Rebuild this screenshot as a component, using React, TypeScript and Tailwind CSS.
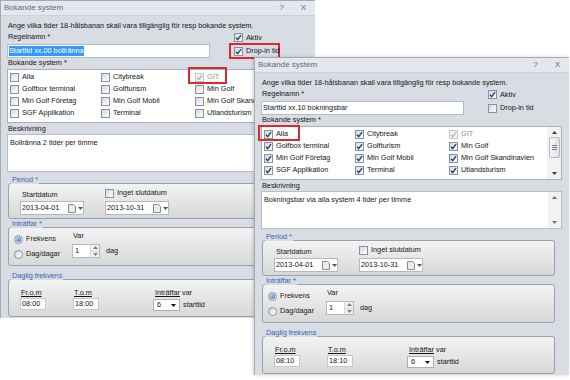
import React from 'react';

interface Option {
  label: string;
  checked?: boolean;
  disabled?: boolean;
}

interface DialogProps {
  name: string;
  nameSelected?: boolean;
  dropIn: boolean;
  dropInMarked?: boolean;
  options: Option[];
  description: string;
  scrollbars?: boolean;
  narrow?: boolean;
  from: string;
  to: string;
}

const NAMES = [
  'Alla',
  'Citybreak',
  'GIT',
  'Golfbox terminal',
  'Golfturism',
  'Min Golf',
  'Min Golf Företag',
  'Min Golf Mobil',
  'Min Golf Skandinavien',
  'SGF Applikation',
  'Terminal',
  'Utlandsturism',
];

const FIRST: Option[] = NAMES.map((label) => ({
  label,
  checked: label === 'GIT',
  disabled: label === 'GIT',
}));

const SECOND: Option[] = NAMES.map((label) => ({
  label,
  checked: true,
  disabled: label === 'GIT',
}));

const Check = ({ on, off }: { on?: boolean; off?: boolean }) => (
  <span
    className={`flex h-[9px] w-[9px] shrink-0 items-center justify-center border ${
      off ? 'border-[#c4c8ce] bg-[#f2f3f4]' : 'border-[#8a919b] bg-[linear-gradient(135deg,#d4d8dd,#ffffff)]'
    }`}
  >
    {on && (
      <svg viewBox="0 0 7 7" className="h-[7px] w-[7px]">
        <path d="M1 3.8 2.7 5.6 6.1 1.1" fill="none" stroke={off ? '#b3b7bd' : '#23417e'} strokeWidth="1.4" />
      </svg>
    )}
  </span>
);

const Radio = ({ on }: { on?: boolean }) => (
  <span className="flex h-[9px] w-[9px] shrink-0 items-center justify-center rounded-full border border-[#8a919b] bg-[linear-gradient(135deg,#d2d6db,#ffffff)]">
    {on && <span className="h-[5px] w-[5px] rounded-full bg-[radial-gradient(circle_at_35%_35%,#a9cbf3,#2a5cb0)]" />}
  </span>
);

const Arrow = ({ up, color = '#3a3a3a' }: { up?: boolean; color?: string }) => (
  <svg width="5" height="3" viewBox="0 0 5 3">
    <path d={up ? 'M0 3 2.5 0 5 3Z' : 'M0 0 2.5 3 5 0Z'} fill={color} />
  </svg>
);

const DateBox = ({ value, className = '' }: { value: string; className?: string }) => (
  <div className={`flex h-[14px] w-[64px] items-center border border-[#b2b9c3] bg-white pl-[1px] ${className}`}>
    <span className="w-[46px]">{value}</span>
    <svg width="8" height="9" viewBox="0 0 8 9">
      <path d="M0.5 0.5h5l2 2v6h-7z" fill="#ebebeb" stroke="#8a8a8a" />
    </svg>
    <span className="ml-[2px] flex">
      <Arrow color="#555" />
    </span>
  </div>
);

const Spin = ({ className = '' }: { className?: string }) => (
  <div className={`flex h-[14px] w-[28px] border border-[#b2b9c3] bg-white ${className}`}>
    <span className="flex-1 pl-[2px] leading-[12px]">1</span>
    <div className="flex w-[9px] flex-col border-l border-[#d3d7dc] bg-[#eef0f3]">
      <div className="flex flex-1 items-center justify-center border-b border-[#d3d7dc]">
        <Arrow up color="#7a7f86" />
      </div>
      <div className="flex flex-1 items-center justify-center">
        <Arrow color="#7a7f86" />
      </div>
    </div>
  </div>
);

const TimeBox = ({ value }: { value: string }) => (
  <div className="h-[12px] w-[26px] border border-[#c3c8cf] bg-white pl-[1px]">{value}</div>
);

// legend sits on the top border; padding goes on the inner box so the legend stays at the left
const Group = ({ title, className, pad, children }: { title: string; className: string; pad: string; children: React.ReactNode }) => (
  <fieldset
    className={`ml-[1px] mr-[7px] rounded-[3px] border border-[#9ba1aa] bg-[linear-gradient(180deg,#f3f3f3,#d8d8d8)] ${className}`}
  >
    <legend className="ml-[2px] px-[1px] pb-[6px] leading-[10px] text-[#3565b5]">{title}</legend>
    <div className={pad}>{children}</div>
  </fieldset>
);

const Dialog = ({ name, nameSelected, dropIn, dropInMarked, options, description, scrollbars, narrow, from, to }: DialogProps) => {
  const rows = [0, 1, 2, 3].map((r) => options.slice(r * 3, r * 3 + 3));

  return (
    <div className="w-[315px] border-l border-t border-[#a3aab4] bg-[#d8dce3]">
      {/* Title bar */}
      <div className="flex h-[15px] items-center justify-between border-b border-[#cdd2d9] bg-[#e4e7ec] pl-[3px] pr-[9px] text-[8px] text-[#626a76]">
        <span>Bokande system</span>
        <span className="flex gap-[17px]">
          <span>?</span>
          <span>X</span>
        </span>
      </div>

      <div className="pb-[1px] pl-[6px] pr-[7px] pt-[5px]">
        <div className="h-[10px] pl-[1px]">Ange vilka tider 18-hålsbanan skall vara tillgänglig för resp bokande system.</div>

        {/* Regelnamn + flags */}
        <div className="flex">
          <div className="w-[203px]">
            <div className="h-[12px] pl-[1px] leading-[12px]">Regelnamn *</div>
            <div className="mt-[1px] flex h-[14px] items-center border border-[#b5bcc6] bg-white pl-[1px]">
              <span className={nameSelected ? 'bg-[#3399ff] text-white' : ''}>{name}</span>
            </div>
          </div>
          <div className="ml-[19px] w-[51px]">
            <div className="mt-[1px] flex h-[11px] items-center gap-[3px] pl-[5px]">
              <Check on />
              <span>Aktiv</span>
            </div>
            <div
              className={`flex h-[16px] items-center gap-[3px] border-2 pl-[3px] ${
                dropInMarked ? 'border-[#d92a2f]' : 'border-transparent'
              }`}
            >
              <Check on={dropIn} />
              <span className="whitespace-nowrap">Drop-in tid</span>
            </div>
          </div>
        </div>

        {/* Bokande system */}
        <div className="-mt-[1px] h-[10px] pl-[1px]">Bokande system *</div>
        <div className={`mt-[1px] flex h-[54px] overflow-hidden border border-[#a9b0ba] bg-white ${narrow ? 'w-[248px]' : ''}`}>
          <div className="flex-1 pl-[2px] pt-[1px]">
            {rows.map((row, i) => (
              <div key={i} className="grid h-[12px] grid-cols-[91px_94px_1fr] items-center">
                {row.map((o) => (
                  <div key={o.label} className="flex items-center gap-[3px]">
                    <Check on={o.checked} off={o.disabled} />
                    <span className={`whitespace-nowrap ${o.disabled ? 'text-[#8d9096]' : ''}`}>{o.label}</span>
                  </div>
                ))}
              </div>
            ))}
          </div>
          {scrollbars && (
            <div className="flex w-[14px] flex-col items-center bg-[#f1f2f4] py-[1px]">
              <div className="flex h-[9px] items-center">
                <Arrow up />
              </div>
              <div className="flex h-[21px] w-[11px] flex-col items-center justify-center gap-[1px] rounded-[2px] border border-[#b4b9c1] bg-[linear-gradient(90deg,#f8f8f8,#dcdfe3)]">
                <span className="h-px w-[5px] bg-[#7c828b]" />
                <span className="h-px w-[5px] bg-[#7c828b]" />
                <span className="h-px w-[5px] bg-[#7c828b]" />
              </div>
              <div className="flex-1" />
              <div className="flex h-[9px] items-center">
                <Arrow />
              </div>
            </div>
          )}
        </div>

        {/* Beskrivning */}
        <div className="mt-[1px] h-[10px] pl-[1px]">Beskrivning</div>
        <div className="flex h-[38px] border border-[#b8bec7] bg-white">
          <div className="flex-1 pl-[2px] pt-[3px]">{description}</div>
          {scrollbars && (
            <div className="flex w-[13px] flex-col items-center justify-between bg-[#f1f2f4] py-[4px]">
              <Arrow up color="#6a6f76" />
              <Arrow color="#6a6f76" />
            </div>
          )}
        </div>

        {/* Period */}
        <Group title="Period *" className="mt-[3px]" pad="px-[11px] pb-[3px]">
          <div className="flex">
            <div className="w-[85px]">
              <div className="-mt-[1px] pl-[2px]">Startdatum</div>
              <DateBox className="mt-[1px]" value="2013-04-01" />
            </div>
            <div>
              <div className="-mt-[3px] flex h-[10px] items-center gap-[3px]">
                <Check />
                <span>Inget slutdatum</span>
              </div>
              <DateBox className="mt-[3px]" value="2013-10-31" />
            </div>
          </div>
        </Group>

        {/* Inträffar */}
        <Group title="Inträffar *" className="" pad="px-[5px] pb-[5px]">
          <div className="flex items-start">
            <div className="-mt-[2px] w-[58px]">
              <div className="flex h-[12px] items-center gap-[3px]">
                <Radio on />
                <span>Frekvens</span>
              </div>
              <div className="mt-[3px] flex h-[12px] items-center gap-[3px]">
                <Radio />
                <span>Dag/dagar</span>
              </div>
            </div>
            <div className="-mt-[4px]">
              <div className="pl-[1px]">Var</div>
              <Spin className="mt-[3px]" />
            </div>
            <div className="ml-[6px] mt-[11px]">dag</div>
          </div>
        </Group>

        {/* Daglig frekvens */}
        <Group title="Daglig frekvens" className="mt-[5px]" pad="px-[11px] pb-[5px]">
          <div className="mt-[1px] flex">
            <div className="w-[53px]">
              <div className="pl-[1px] underline">Fr.o.m</div>
              <TimeBox value={from} />
            </div>
            <div className="w-[80px]">
              <div className="pl-[1px] underline">T.o.m</div>
              <TimeBox value={to} />
            </div>
            <div>
              <div className="pl-[2px]">
                <span className="underline">Inträffar</span> var
              </div>
              <div className="mt-[1px] flex items-center">
                <div className="flex h-[12px] w-[27px] items-center justify-between border border-[#a9b0ba] bg-white px-[3px]">
                  <span>6</span>
                  <Arrow color="#111" />
                </div>
                <span className="ml-[3px]">starttid</span>
              </div>
            </div>
          </div>
        </Group>
      </div>
    </div>
  );
};

export default function App() {
  return (
    <div className="relative h-[380px] w-[570px] overflow-hidden bg-white font-['Liberation_Sans',Arial,sans-serif] text-[7.3px] leading-[10px] text-[#161616]">
      <Dialog
        name="Starttid xx.00 bollränna"
        nameSelected
        dropIn
        dropInMarked
        options={FIRST}
        description="Bollränna 2 tider per timme"
        narrow
        from="08:00"
        to="18:00"
      />
      <div className="absolute left-[254px] top-[57px] shadow-[-1px_0_3px_rgba(0,0,0,0.18)]">
        <Dialog
          name="Starttid xx.10 bokningsbar"
          dropIn={false}
          options={SECOND}
          description="Bokningsbar via alla system 4 tider per timme"
          scrollbars
          from="08:10"
          to="18:10"
        />
      </div>
      {/* red highlight marks drawn over the screenshots */}
      <span className="absolute left-[188px] top-[67px] h-[17px] w-[39px] border-2 border-[#d92a2f]" />
      <span className="absolute left-[258px] top-[125px] h-[16px] w-[42px] border-2 border-[#d92a2f]" />
    </div>
  );
}
